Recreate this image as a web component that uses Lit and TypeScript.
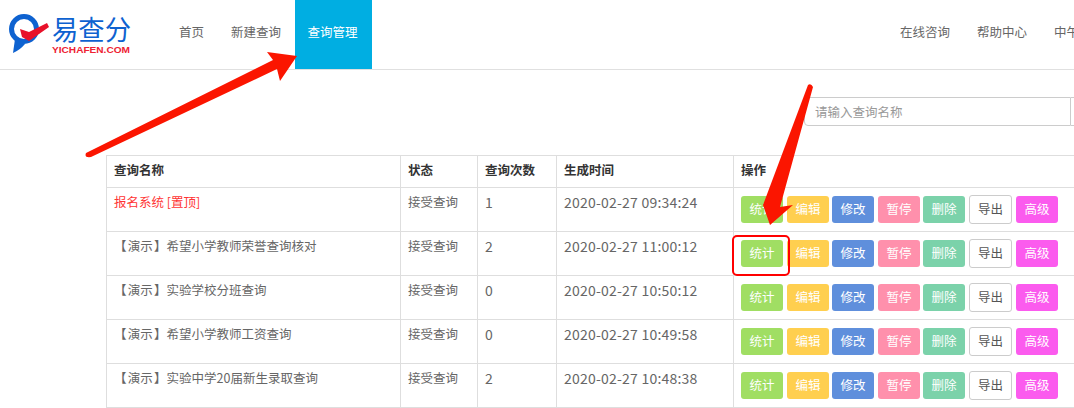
import { LitElement, html, css, svg } from "lit";
import { customElement } from "lit/decorators.js";

const rows = [
  { name: "报名系统 [置顶]", top: true, status: "接受查询", count: 1, time: "2020-02-27 09:34:24" },
  { name: "【 演示 】希望小学教师荣誉查询核对", top: false, status: "接受查询", count: 2, time: "2020-02-27 11:00:12" },
  { name: "【 演示 】实验学校分班查询", top: false, status: "接受查询", count: 0, time: "2020-02-27 10:50:12" },
  { name: "【 演示 】希望小学教师工资查询", top: false, status: "接受查询", count: 0, time: "2020-02-27 10:49:58" },
  { name: "【 演示 】实验中学20届新生录取查询", top: false, status: "接受查询", count: 2, time: "2020-02-27 10:48:38" },
];
const actions = [
  ["统计", "green"], ["编辑", "yellow"], ["修改", "blue"], ["暂停", "pink"],
  ["删除", "teal"], ["导出", "plain"], ["高级", "magenta"],
];

@customElement("app-root")
export class AppRoot extends LitElement {
  static styles = css`
    :host {
      display: block; position: relative; width: 1074px; height: 408px; overflow: hidden; background: #fff;
      font-family: "Noto Sans CJK SC", "Liberation Sans", sans-serif; font-size: 12.5px; color: #666;
    }
    header { display: flex; height: 69px; border-bottom: 1px solid #e0e0e0; }
    .logo { width: 165px; flex: none; display: block; }
    .nav { display: flex; list-style: none; margin: 0; padding: 0 0 0 0.5px; }
    .nav li { padding: 0 13.5px; line-height: 63px; white-space: nowrap; }
    .nav li.active { background: #00aee2; color: #fff; padding: 0 13px; width: 51px; }
    .right { margin-left: auto; margin-right: -31px; }
    .search { display: flex; height: 29px; margin: 27px 0 0 804px; width: 300px; }
    .search .input { width: 245px; flex: none; border: 1px solid #ccc; border-radius: 4px 0 0 4px; padding: 0 10px; color: #999; line-height: 27px; }
    .search .addon { flex: 1; border: 1px solid #ccc; border-left: none; }
    table { border-collapse: collapse; table-layout: fixed; width: 980px; margin: 29px 0 0 106px; }
    th, td { border: 1px solid #dedede; padding: 0 7px; text-align: left; vertical-align: top; box-sizing: border-box; }
    th { height: 32px; line-height: 28px; color: #333; font-weight: 700; }
    td { height: 44px; line-height: 28px; }
    td.name { word-spacing: -1.5px; }
    td.count { font-size: 14px; }
    td.time { font-size: 14px; letter-spacing: .22px; white-space: nowrap; }
    td.ops { padding-top: 8px; line-height: 1; }
    td.red { color: #f33; word-spacing: 0; }
    .ops-row { display: flex; gap: 4px; align-items: center; height: 27px; }
    .btn { width: 42px; height: 27px; flex: none; box-sizing: border-box; border-radius: 3px; color: #fff; display: flex; align-items: center; justify-content: center; font-size: 12.5px; }
    .btn.green { background: #a0de63; }
    .btn.yellow { background: #ffcf4f; }
    .btn.blue { background: #5f8fdc; margin-left: -1px; }
    .btn.pink { background: #ff90ac; }
    .btn.teal { background: #7bd2aa; margin-left: -1px; }
    .btn.plain { background: #fff; color: #555; border: 1px solid #ccc; width: 43px; height: 29px; }
    .btn.magenta { background: #fb5bee; }
    .overlay { position: absolute; left: 0; top: 0; width: 1074px; height: 408px; pointer-events: none; }
  `;

  private logo() {
    return html`<svg class="logo" width="165" height="69" viewBox="0 0 165 69">
      <circle cx="24" cy="29" r="12.5" fill="none" stroke="#0e62d0" stroke-width="5" />
      <path d="M13 53 L15 39 L25 44 Q20 50 13 53 Z" fill="#0e62d0" />
      <path d="M20 29 L29 32 L47 23 L49 27 L29 41 L22 37 Z" fill="#e8112a" />
      <text x="52" y="40" font-size="27" font-weight="400" fill="#0e62d0" textLength="79" lengthAdjust="spacingAndGlyphs" font-family="Noto Sans CJK SC, sans-serif">易查分</text>
      <text x="52" y="52.5" font-size="9.5" font-weight="700" fill="#ee2233" textLength="78" lengthAdjust="spacingAndGlyphs" font-family="Liberation Sans, sans-serif">YICHAFEN.COM</text>
    </svg>`;
  }

  render() {
    return html`
      <header>
        ${this.logo()}
        <ul class="nav">
          <li>首页</li><li>新建查询</li><li class="active">查询管理</li>
        </ul>
        <ul class="nav right">
          <li>在线咨询</li><li>帮助中心</li><li>中午好</li>
        </ul>
      </header>
      <div class="search"><div class="input">请输入查询名称</div><div class="addon"></div></div>
      <table>
        <colgroup>
          <col style="width:294px" /><col style="width:77px" /><col style="width:79px" /><col style="width:177px" /><col />
        </colgroup>
        <thead><tr><th>查询名称</th><th>状态</th><th>查询次数</th><th>生成时间</th><th>操作</th></tr></thead>
        <tbody>
          ${rows.map((r) => html`<tr>
            <td class="name ${r.top ? "red" : ""}">${r.name}</td>
            <td>${r.status}</td>
            <td class="count">${r.count}</td>
            <td class="time">${r.time}</td>
            <td class="ops"><div class="ops-row">
              ${actions.map(([t, c]) => html`<span class="btn ${c}">${t}</span>`)}
            </div></td>
          </tr>`)}
        </tbody>
      </table>
      <svg class="overlay" viewBox="0 0 1074 408">
        ${svg`<path d="M86 153 L273 60 L267 52 L297 56 L280 81 L277 69 L91 157 Q84 158 86 153 Z" fill="#fb1500" />
        <path d="M808 85 Q811 83 813 87 L780 207 L793 205 L770 225 L763 205 Z" fill="#fb1500" />
        <rect x="733" y="236" width="56" height="39" rx="4" fill="none" stroke="#f00" stroke-width="2" />`}
      </svg>
    `;
  }
}
